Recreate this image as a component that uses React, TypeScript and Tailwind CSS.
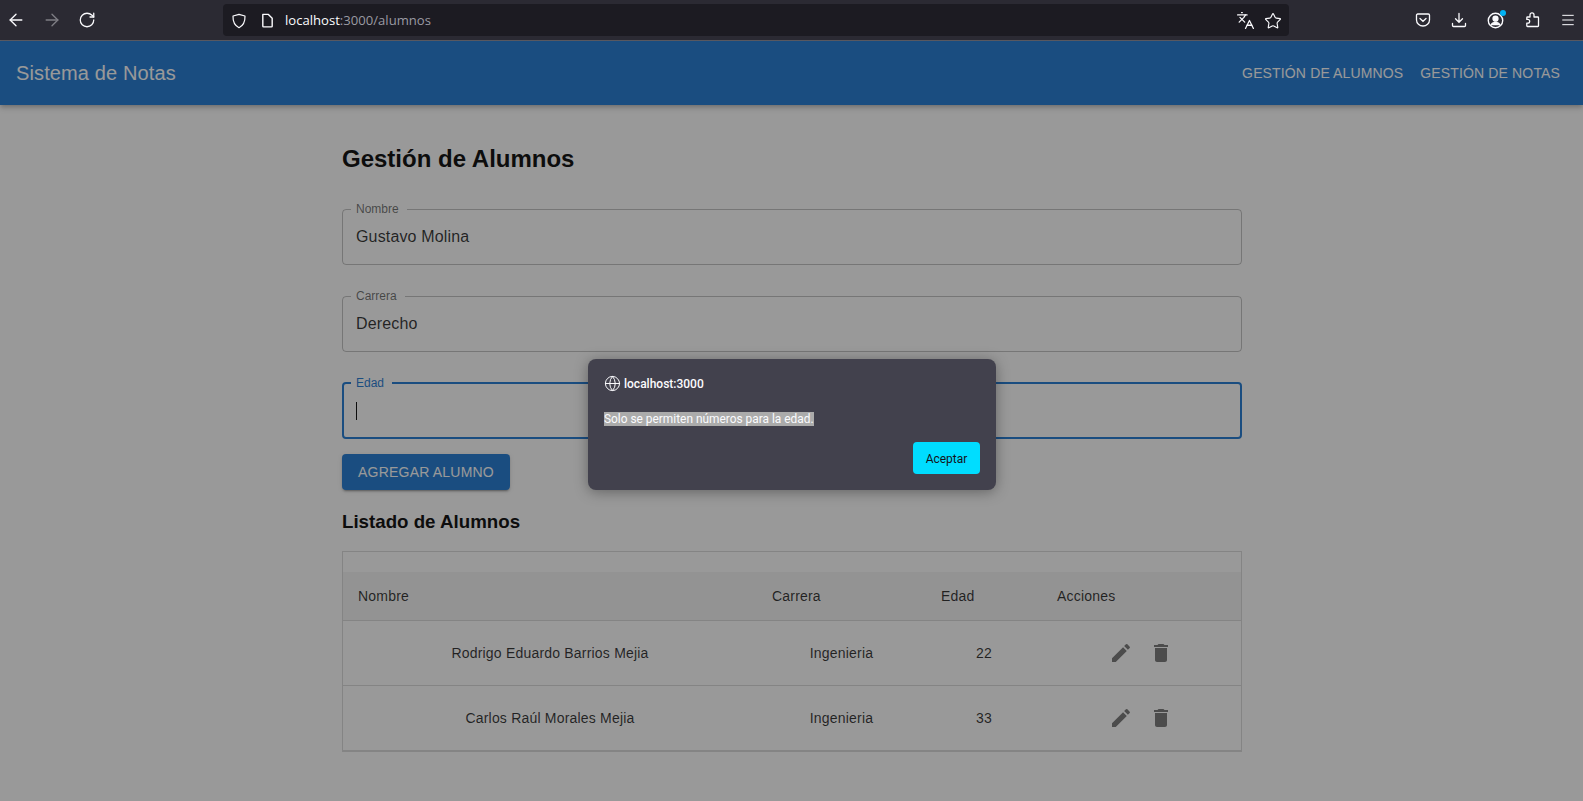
import { ArrowLeft, ArrowRight, Globe, Languages, Menu, RotateCw, Star } from 'lucide-react';

const UI_FONT = "font-['Open_Sans','Noto_Sans',sans-serif]";

const ALUMNOS = [
  { nombre: 'Rodrigo Eduardo Barrios Mejia', carrera: 'Ingenieria', edad: 22 },
  { nombre: 'Carlos Raúl Morales Mejia', carrera: 'Ingenieria', edad: 33 },
];

function Field({ label, value, focused }: { label: string; value?: string; focused?: boolean }) {
  return (
    <fieldset
      className={
        focused
          ? 'h-[62px] rounded border-2 border-[#1976d2] px-[12px] flex-none'
          : 'h-[62px] rounded border border-black/25 px-[13px] flex-none'
      }
    >
      <legend
        className={
          focused
            ? '-ml-[5px] pl-[5px] pr-[8px] text-[12px] leading-[12px] text-[#1976d2]'
            : '-ml-[5px] pl-[5px] pr-[8px] text-[12px] leading-[12px] text-black/60'
        }
      >
        {label}
      </legend>
      <div className="h-[43px] flex items-center text-[16px] tracking-[0.15px] text-black/85">
        {value}
        {focused && <span className="block w-px h-[18px] bg-black" />}
      </div>
    </fieldset>
  );
}

function EditIcon() {
  return (
    <svg viewBox="0 0 24 24" className="w-6 h-6 fill-black/55">
      <path d="M3 17.25V21h3.75L17.81 9.94l-3.75-3.75L3 17.25zM20.71 7.04c.39-.39.39-1.02 0-1.41l-2.34-2.34a.9959.9959 0 0 0-1.41 0l-1.83 1.83 3.75 3.75 1.83-1.83z" />
    </svg>
  );
}

function DeleteIcon() {
  return (
    <svg viewBox="0 0 24 24" className="w-6 h-6 fill-black/55">
      <path d="M6 19c0 1.1.9 2 2 2h8c1.1 0 2-.9 2-2V7H6v12zM19 4h-3.5l-1-1h-5l-1 1H5v2h14V4z" />
    </svg>
  );
}

function BrowserBar() {
  return (
    <div className={`h-[41px] bg-[#2b2a33] border-b border-[#5a5a62] flex items-center text-[#fbfbfe] ${UI_FONT}`}>
      <div className="w-[223px] pl-[6px] flex items-center gap-[16px] flex-none">
        <ArrowLeft size={20} strokeWidth={1.6} />
        <ArrowRight size={20} strokeWidth={1.6} className="opacity-40" />
        <RotateCw size={18} strokeWidth={1.7} />
      </div>
      <div className="w-[1066px] h-[32px] rounded bg-[#1c1b22] flex items-center pl-[8px] pr-[7px] flex-none">
        <svg viewBox="0 0 16 16" className="w-[16px] h-[16px] mt-[1px] fill-none stroke-current" strokeWidth="1.2">
          <path d="M8 1.3 14 3c.2 5.5-1.6 9.5-6 11.7C3.600 12.500 1.800 8.500 2 3z" strokeLinejoin="round" />
        </svg>
        <svg viewBox="0 0 16 16" className="w-[15px] h-[15px] ml-[13px] fill-none stroke-current" strokeWidth="1.5">
          <path d="M3 1.500h6l4 4V14a.8.8 0 0 1-.8.8H3.800A.8.8 0 0 1 3 14z" strokeLinejoin="round" />
        </svg>
        <span className="ml-[10px] mt-[1px] text-[13.100px] text-[#fbfbfe]">
          localhost<span className="text-[#9a9aa2]">:3000/alumnos</span>
        </span>
        <Languages size={19} strokeWidth={1.6} className="ml-auto mt-[1px]" />
        <Star size={18} strokeWidth={1.5} className="ml-[9px] mt-[1px]" />
      </div>
      <div className="flex-1 flex items-center justify-end gap-[20px] pr-[7px]">
        <svg viewBox="0 0 16 16" className="w-[16px] h-[16px] fill-none stroke-current" strokeWidth="1.3">
          <path d="M1.500 3.200c0-.7.5-1.200 1.200-1.200h10.600c.7 0 1.200.5 1.200 1.200V8c0 3.500-3 6-6.500 6S1.500 11.500 1.500 8z" />
          <path d="m5 6.500 3 2.800 3-2.800" strokeLinecap="round" />
        </svg>
        <svg viewBox="0 0 16 16" className="w-[16px] h-[16px] fill-none stroke-current" strokeWidth="1.3">
          <path d="M8 1.500V10M4.500 6.800 8 10.300l3.500-3.500M1.500 11.500v2c0 .6.400 1 1 1h11c.6 0 1-.4 1-1v-2" strokeLinecap="round" />
        </svg>
        <div className="relative w-[17px] h-[17px]">
          <svg viewBox="0 0 16 16" className="w-[17px] h-[17px] fill-none stroke-current" strokeWidth="1.3">
            <circle cx="8" cy="8" r="6.800" />
            <circle cx="8" cy="6.300" r="2.300" fill="currentColor" />
            <path d="M3.800 12.500c.8-2 2.400-2.700 4.200-2.700s3.400.7 4.200 2.700" fill="currentColor" />
          </svg>
          <span className="absolute -top-[2px] -right-[2px] w-[6px] h-[6px] rounded-full bg-[#00b3f4]" />
        </div>
        <svg viewBox="0 0 16 16" className="w-[16px] h-[16px] fill-none stroke-current" strokeWidth="1.3">
          <path d="M6 2.800a2 2 0 0 1 4 0V5h3.800c.4 0 .7.300.7.700v8.100c0 .4-.3.700-.7.700H3.500c-.4 0-.7-.3-.7-.7v-2.600h1a1.900 1.900 0 0 0 0-3.800h-1V5.700c0-.4.300-.7.700-.7H6z" strokeLinejoin="round" />
        </svg>
        <Menu size={16} strokeWidth={1.5} />
      </div>
    </div>
  );
}

export default function App() {
  return (
    <div className="h-screen overflow-hidden font-['Liberation_Sans',Arial,sans-serif]">
      <BrowserBar />

      <div className="relative h-[760px] bg-white">
        <header className="h-[64px] bg-[#1976d2] text-white flex items-center justify-between pl-[16px] pr-[23px] shadow-[0_2px_4px_-1px_rgba(0,0,0,0.2),0_4px_5px_0_rgba(0,0,0,0.14)]">
          <span className="text-[20px] tracking-[0.12px]">Sistema de Notas</span>
          <nav className="flex gap-[17px] text-[14px] tracking-[0.14px]">
            <span>GESTIÓN DE ALUMNOS</span>
            <span>GESTIÓN DE NOTAS</span>
          </nav>
        </header>

        <main className="w-[900px] ml-[342px] flex flex-col">
          <h1 className="mt-[38px] text-[24px] leading-[32px] font-bold text-black">Gestión de Alumnos</h1>

          <div className="mt-[28px] flex flex-col gap-[25px]">
            <Field label="Nombre" value="Gustavo Molina" />
            <Field label="Carrera" value="Derecho" />
            <Field label="Edad" focused />
          </div>

          <button
            type="button"
            className="mt-[15px] w-[168px] h-[36px] rounded bg-[#1976d2] text-white text-[14px] tracking-[0.2px] shadow-[0_3px_1px_-2px_rgba(0,0,0,0.2),0_2px_2px_0_rgba(0,0,0,0.14),0_1px_5px_0_rgba(0,0,0,0.12)]"
          >
            AGREGAR ALUMNO
          </button>

          <h3 className="mt-[16px] text-[18.720px] leading-[32px] font-bold text-black">Listado de Alumnos</h3>

          <div className="mt-[13px] border border-black/15 border-b-2">
            <div className="h-[20px]" />
            <table className="w-full table-fixed text-[14px] text-black/85 tracking-[0.2px]">
              <colgroup>
                <col className="w-[414px]" />
                <col className="w-[169px]" />
                <col className="w-[116px]" />
                <col />
              </colgroup>
              <thead>
                <tr className="h-[48px] bg-[#f5f5f5] border-b border-black/15">
                  <th className="px-[15px] pt-[2px] text-left font-normal">Nombre</th>
                  <th className="px-[15px] pt-[2px] text-left font-normal">Carrera</th>
                  <th className="px-[15px] pt-[2px] text-left font-normal">Edad</th>
                  <th className="px-[15px] pt-[2px] text-left font-normal">Acciones</th>
                </tr>
              </thead>
              <tbody>
                {ALUMNOS.map((a) => (
                  <tr key={a.nombre} className="h-[65px] border-b border-black/15 last:border-b-0">
                    <td className="px-[15px] pt-[2px] text-center">{a.nombre}</td>
                    <td className="px-[15px] pt-[2px] text-center">{a.carrera}</td>
                    <td className="px-[15px] pt-[2px] text-center">{a.edad}</td>
                    <td className="pl-[15px] pr-[17px]">
                      <div className="flex justify-center gap-[16px]">
                        <EditIcon />
                        <DeleteIcon />
                      </div>
                    </td>
                  </tr>
                ))}
              </tbody>
            </table>
          </div>
        </main>

        {/* browser alert: scrim and dialog sit over the page */}
        <div className="absolute inset-0 bg-[#1c1c1c]/45" />
        <div className="absolute left-[588px] top-[318px] w-[408px] h-[131px] rounded-[8px] bg-[#42414d] text-[#fbfbfe] p-[16px] flex flex-col shadow-[0_2px_14px_rgba(0,0,0,0.35)] font-['Roboto',sans-serif]">
          <div className="flex items-center gap-[3px] text-[12px] font-medium leading-[16px]">
            <Globe size={17} strokeWidth={1.4} />
            <span>localhost:3000</span>
          </div>
          <p className="mt-[19px] text-[11.900px] leading-[16px]">
            <span className="bg-[#ababab]">Solo se permiten números para la edad.</span>
          </p>
          <button
            type="button"
            className="mt-auto self-end w-[67px] h-[32px] pt-[1px] rounded bg-[#00ddff] text-[#15141a] text-[12px]"
          >
            Aceptar
          </button>
        </div>
      </div>
    </div>
  );
}
